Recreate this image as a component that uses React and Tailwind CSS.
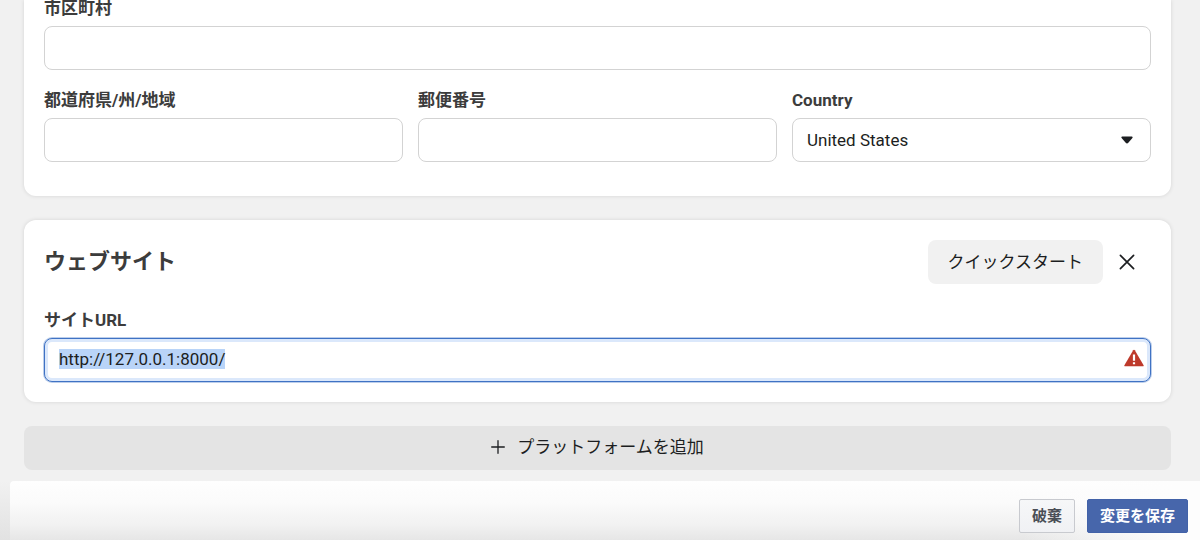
import React, { useEffect, useRef, useState } from "react";

const labelClass = "block text-[17px] leading-4 font-bold text-[#3c3c3c] mb-[10px]";
const fieldClass = "block w-full h-11 rounded-lg border border-[#d3d3d3] bg-white px-[14px] text-[17px] leading-6 text-[#1c1e21] outline-none";
const cardClass = "bg-white px-5 shadow-[0_0_4px_rgba(0,0,0,0.12)]";

const TextField = ({ id, label }) => {
  const [value, setValue] = useState("");
  return (
    <div>
      <label htmlFor={id} className={labelClass}>{label}</label>
      <input
        id={id}
        type="text"
        className={fieldClass}
        value={value}
        onChange={(event) => setValue(event.target.value)}/>
    </div>
  )
}

const CountrySelect = () => {
  const [country, setCountry] = useState("US");
  return (
    <div>
      <label htmlFor="country" className={labelClass}>Country</label>
      <div className="relative">
        <select
          id="country"
          className={fieldClass + " appearance-none"}
          value={country}
          onChange={(event) => setCountry(event.target.value)}>
            <option value="US">United States</option>
        </select>
        <svg className="pointer-events-none absolute right-[18px] top-[18px]" width="12" height="8" viewBox="0 0 12 8" fill="#1c1e21">
          <path d="M1.2 0.5h9.6c.8 0 1.1.8.6 1.4L7.3 6.8c-.7.8-1.9.8-2.6 0L.6 1.9C.1 1.3.4.5 1.2.5z"/>
        </svg>
      </div>
    </div>
  )
}

const AddressCard = () => {
  return (
    <section className={cardClass + " rounded-b-xl pb-[34px]"}>
      <TextField id="city" label="市区町村"/>
      <div className="mt-[22px] grid grid-cols-3 gap-[15px]">
        <TextField id="state" label="都道府県/州/地域"/>
        <TextField id="zip" label="郵便番号"/>
        <CountrySelect/>
      </div>
    </section>
  )
}

const WebsiteCard = () => {
  const [url, setUrl] = useState("http://127.0.0.1:8000/");
  const urlRef = useRef(null);

  useEffect(() => {
    urlRef.current.focus();
    urlRef.current.select();
  }, []);

  return (
    <section className={cardClass + " mt-6 rounded-xl py-5"}>
      <div className="flex items-center justify-between">
        <h2 className="text-[22px] leading-6 font-bold text-[#3c3c3c]">ウェブサイト</h2>
        <div className="flex items-center">
          <button type="button" className="h-11 rounded-lg bg-[#f1f1f1] px-5 text-[17px] leading-6 text-[#1c1e21]">
            クイックスタート
          </button>
          <button type="button" aria-label="閉じる" className="flex h-11 w-12 items-center justify-center">
            <svg width="16" height="16" viewBox="0 0 16 16" fill="none" stroke="#1c1e21" strokeWidth="1.7" strokeLinecap="round">
              <path d="M1.4 1.4l13.2 13.2M14.6 1.4L1.4 14.6"/>
            </svg>
          </button>
        </div>
      </div>
      <div className="mt-7">
        <label htmlFor="siteUrl" className={labelClass}>サイトURL</label>
        <div className="relative">
          <input
            ref={urlRef}
            id="siteUrl"
            type="text"
            className="block h-11 w-full rounded-lg border border-[#3f72c4] bg-white pb-0.5 pl-[14px] pr-10 text-[17px] leading-6 text-[#1c1e21] shadow-[0_0_0_1px_rgba(63,114,196,0.35),inset_0_0_0_3px_#dbe8fb] outline-none selection:bg-[#b9d4f8] selection:text-[#1c1e21]"
            value={url}
            onChange={(event) => setUrl(event.target.value)}/>
          <svg className="pointer-events-none absolute right-[7px] top-[11px]" width="20" height="18" viewBox="0 0 20 18">
            <path d="M10 .8c.4 0 .6.2.8.5l8.8 14.9c.3.6 0 1.1-.6 1.1H1c-.6 0-.9-.5-.6-1.1L9.2 1.3C9.4 1 9.6.8 10 .8z" fill="#be3a2b"/>
            <path d="M8.900 5.600h2.200v6.200H8.900zM8.900 13.200h2.200v2.100H8.900z" fill="#fff"/>
          </svg>
        </div>
      </div>
    </section>
  )
}

const Footer = () => {
  return (
    <div className="mt-[11px] flex grow flex-col bg-linear-to-b from-[#f1f1f1] to-[#e2e2e2] pl-[10px]">
      <footer className="flex grow items-start justify-end gap-3 rounded-tl-sm bg-[linear-gradient(to_right,rgba(255,255,255,0)_85%,#fdfdfd_98%),linear-gradient(to_bottom,#fefefe,#fbfbfb_35%,#f1f1f1_75%,#e6e6e6)] pt-[18px] pr-3 pb-[7px]">
        <button type="button" className="h-[34px] rounded-xs border border-[#c8cacf] bg-linear-to-b from-[#f6f7f8] to-[#f0f1f4] px-3 text-[15px] leading-5 font-bold text-[#4b4f56]">
          破棄
        </button>
        <button type="button" className="h-[34px] rounded-xs border border-[#4262a8] bg-[#4766ab] px-3 text-[15px] leading-5 font-bold text-white">
          変更を保存
        </button>
      </footer>
    </div>
  )
}

export default function App() {
  return (
    <div lang="ja" className="flex min-h-screen flex-col bg-[#f1f1f1] font-[Roboto,'Noto_Sans_CJK_JP',sans-serif]">
      <main className="pl-6 pr-[29px]">
        <AddressCard/>
        <WebsiteCard/>
        <button type="button" className="mt-6 flex h-11 w-full items-center justify-center gap-3 rounded-lg bg-[#e4e4e4] pb-0.5 text-[17px] leading-6 text-[#1c1e21]">
          <svg width="14" height="14" viewBox="0 0 14 14" fill="none" stroke="#1c1e21" strokeWidth="1.3" strokeLinecap="round">
            <path d="M7 .7v12.600M.7 7h12.600"/>
          </svg>
          プラットフォームを追加
        </button>
      </main>
      <Footer/>
    </div>
  )
}
